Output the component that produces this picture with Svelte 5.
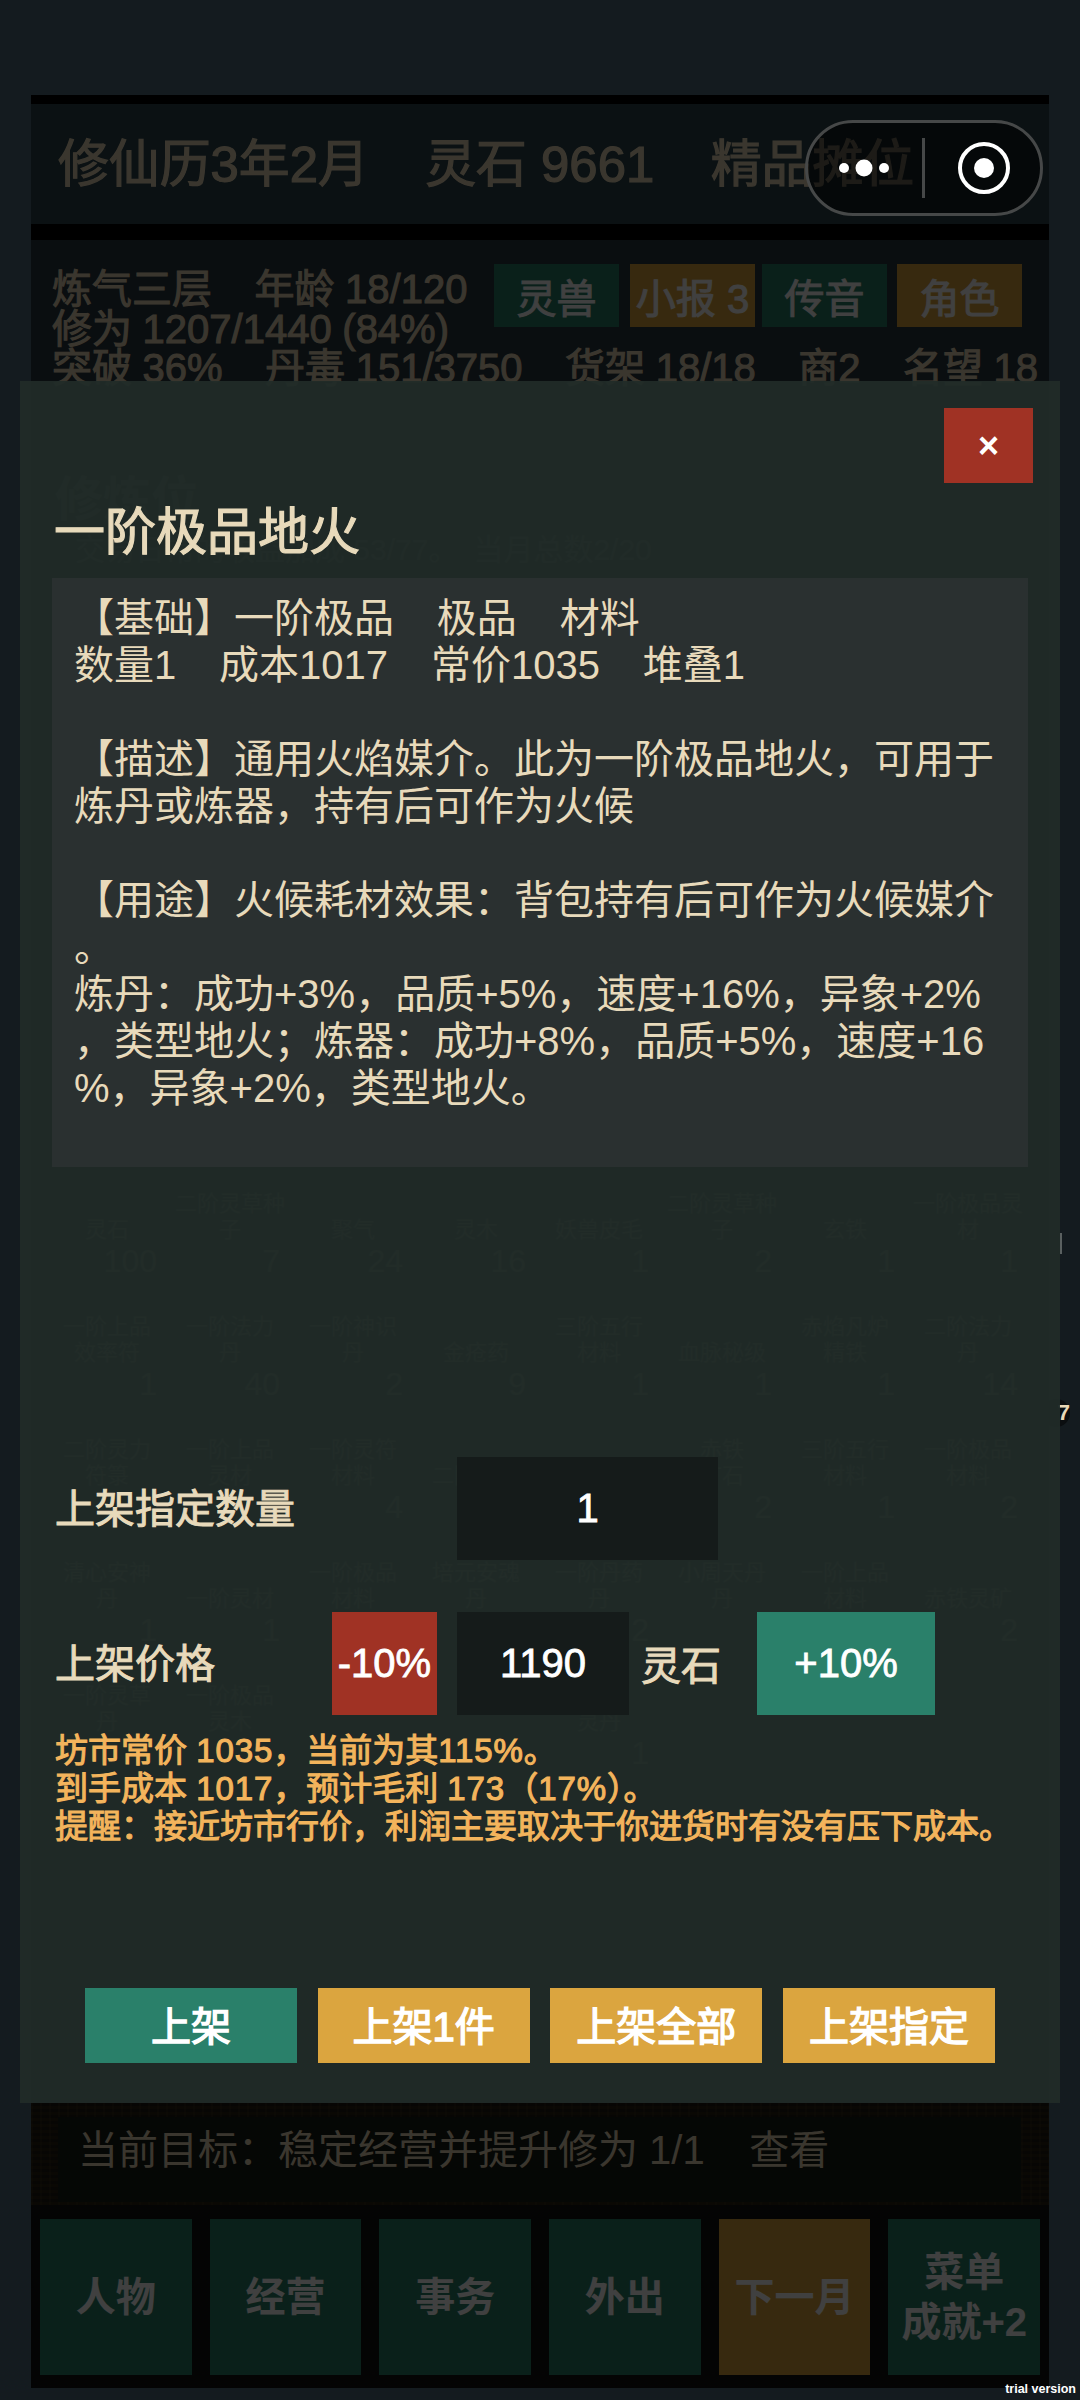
<script>
  const tags = [
    { text: '灵兽', kind: 'green' },
    { text: '小报 3', kind: 'amber' },
    { text: '传音', kind: 'green' },
    { text: '角色', kind: 'amber' }
  ];

  // shelf behind the dialog, barely visible through it
  const goods = [
    ['灵石', '100'], ['二阶灵草种子', '7'], ['聚气', '24'], ['灵木', '16'], ['妖兽皮毛', '1'], ['二阶灵草种子', '2'], ['玄铁', '1'], ['一阶极品灵材', '1'],
    ['一阶上品\n效率符', '1'], ['一阶法力\n丹', '40'], ['一阶神识\n丹', '2'], ['金疮药', '9'], ['三阶五行\n材料', '1'], ['血脉秘级', '1'], ['赤焰凡炉\n精铁', '1'], ['二阶法力\n丹', '14'],
    ['二阶灵力\n符箓', ''], ['一阶上品\n灵材', ''], ['一阶灵符\n材料', '4'], ['二阶灵草', ''], ['灵药', ''], ['赤铁\n矿石', '2'], ['三阶五行\n材料', '1'], ['一阶极品\n材料', '2'],
    ['清心安神\n丹', '1'], ['一阶灵材', '1'], ['一阶极品\n材料', ''], ['培元安魂\n丹', ''], ['一阶丹药\n丹', '2'], ['小周天丹\n丹', ''], ['一阶上品\n材料', ''], ['赤铁灵矿', '2'],
    ['一阶灵草\n丹', ''], ['一阶极品\n灵木', ''], ['', ''], ['', ''], ['灵丹', '1'], ['', ''], ['', ''], ['', '']
  ];

  const tabs = [
    { text: '人物', kind: 'green' },
    { text: '经营', kind: 'green' },
    { text: '事务', kind: 'green' },
    { text: '外出', kind: 'green' },
    { text: '下一月', kind: 'amber' },
    { text: '菜单\n成就+2', kind: 'green' }
  ];

  const detail = `【基础】一阶极品    极品    材料
数量1    成本1017    常价1035    堆叠1

【描述】通用火焰媒介。此为一阶极品地火，可用于
炼丹或炼器，持有后可作为火候

【用途】火候耗材效果：背包持有后可作为火候媒介
。
炼丹：成功+3%，品质+5%，速度+16%，异象+2%
，类型地火；炼器：成功+8%，品质+5%，速度+16
%，异象+2%，类型地火。`;

  const actions = [
    { text: '上架', kind: 'green' },
    { text: '上架1件', kind: 'amber' },
    { text: '上架全部', kind: 'amber' },
    { text: '上架指定', kind: 'amber' }
  ];
</script>

<div class="page">
  <div class="game">
    <div class="strip top"></div>
    <header class="bar">修仙历3年2月    灵石 9661    精品摊位</header>
    <div class="strip mid"></div>

    <section class="info">
      <div class="tags">
        {#each tags as t}
          <span class="tag {t.kind}">{t.text}</span>
        {/each}
      </div>
      <div class="info-text">{`炼气三层    年龄 18/120
修为 1207/1440 (84%)
突破 36%    丹毒 151/3750    货架 18/18    商2    名望 18`}</div>
    </section>

    <section class="shelf">
      <h3>修炼位</h3>
      <p>交易日常的收益加成 53/77。　当月总数2/20</p>
      <div class="goods">
        {#each goods as g}
          <div class="cell">
            <span class="name">{g[0]}</span>
            <span class="qty">{g[1]}</span>
          </div>
        {/each}
      </div>
    </section>

    <section class="goal">
      <div class="goal-box">当前目标：稳定经营并提升修为 1/1    查看</div>
    </section>

    <nav class="tabs">
      {#each tabs as t}
        <span class="tab {t.kind}">{t.text}</span>
      {/each}
    </nav>

    <div class="mask"></div>
  </div>

  <span class="edge-badge">7</span>
  <span class="edge-mark"></span>

  <div class="capsule">
    <svg class="dots" width="60" height="20" viewBox="0 0 60 20">
      <circle cx="9" cy="10" r="5" fill="#fff" />
      <circle cx="29" cy="10" r="8.5" fill="#fff" />
      <circle cx="49" cy="10" r="5" fill="#fff" />
    </svg>
    <i class="divider"></i>
    <svg class="target" width="56" height="56" viewBox="0 0 56 56">
      <circle cx="28" cy="28" r="24" fill="none" stroke="#fff" stroke-width="4" />
      <circle cx="28" cy="28" r="10" fill="#fff" />
    </svg>
  </div>

  <div class="modal">
    <div class="close-row"><button class="close">×</button></div>
    <h2 class="title">一阶极品地火</h2>
    <div class="detail">{detail}</div>

    <div class="row qty-row">
      <span class="label qty-label">上架指定数量</span>
      <div class="field qty-field">1</div>
    </div>

    <div class="row price-row">
      <span class="label price-label">上架价格</span>
      <button class="step minus">-10%</button>
      <div class="field price-field">1190</div>
      <span class="label unit">灵石</span>
      <button class="step plus">+10%</button>
    </div>

    <div class="notes">
      坊市常价{' '}<span class="num">1035</span>，当前为其<span class="num">115%</span>。<br />
      到手成本{' '}<span class="num">1017</span>，预计毛利{' '}<span class="num">173</span>（<span class="num">17%</span>）。<br />
      提醒：接近坊市行价，利润主要取决于你进货时有没有压下成本。
    </div>

    <div class="actions">
      {#each actions as a}
        <button class="action {a.kind}">{a.text}</button>
      {/each}
    </div>
  </div>

  <span class="trial">trial version</span>
</div>

<style>
  :global(body) {
    margin: 0;
    background: #141b1f;
  }

  .page {
    position: relative;
    width: 1080px;
    height: 2400px;
    overflow: hidden;
    background: #141b1f;
    font-family: "Liberation Sans", "Noto Sans CJK SC", sans-serif;
    font-size: 40px;
  }

  .game {
    position: absolute;
    left: 31px;
    top: 95px;
    width: 1018px;
    height: 2293px;
    display: flex;
    flex-direction: column;
    background: #101414;
    color: #e8d8b8;
    overflow: hidden;
  }

  .mask {
    position: absolute;
    inset: 0;
    background: rgba(0, 0, 0, 0.75);
  }

  .strip.top { height: 9px; background: #000; }
  .strip.mid { height: 16px; background: #000; }

  .bar {
    height: 120px;
    box-sizing: border-box;
    display: flex;
    align-items: center;
    padding: 0 0 8px 27px;
    background: #2c444c;
    font-size: 50.85px;
    -webkit-text-stroke: 1.2px currentColor;
    white-space: pre;
  }

  .info {
    height: 170px;
    padding: 24px 20px 0 21px;
    background: #283840;
    overflow: hidden;
    box-sizing: border-box;
    position: relative;
  }

  .info-text {
    font-size: 40px;
    word-spacing: -0.5px;
    line-height: 39.6px;
    padding-top: 6px;
    -webkit-text-stroke: 1px currentColor;
    white-space: pre;
  }

  .tags {
    position: absolute;
    top: 24px;
    left: 463px;
    display: flex;
    gap: 11px;
  }

  .tag {
    width: 125px;
    height: 63px;
    display: flex;
    align-items: center;
    justify-content: center;
    color: #fff;
    -webkit-text-stroke: 1px currentColor;
    white-space: nowrap;
  }

  .tag:nth-child(3) { margin-left: -4px; }
  .tag:nth-child(4) { margin-left: -1px; }

  .green { background: #2a806a; }
  .amber { background: #dba53f; }

  .shelf {
    flex: 1;
    min-height: 0;
    background: #283838;
    padding: 60px 24px 0;
    overflow: hidden;
  }

  .shelf h3 {
    margin: 0;
    font-size: 48px;
    line-height: 60px;
    color: #cbbb98;
  }

  .shelf p {
    margin: 0;
    font-size: 30px;
    line-height: 40px;
    padding-left: 20px;
    color: #cbbb98;
  }

  .goods {
    margin: 596px 0 0 -3px;
    display: grid;
    grid-template-columns: repeat(8, 110px);
    grid-auto-rows: 113px;
    gap: 10px 13px;
  }

  .cell {
    display: flex;
    flex-direction: column;
    justify-content: flex-end;
    background: #2c3e40;
    color: #e8d8b8;
    text-align: center;
  }

  .name {
    font-size: 22px;
    line-height: 26px;
    white-space: pre-line;
  }

  .qty {
    font-size: 32px;
    line-height: 36px;
    height: 36px;
    text-align: right;
    padding-right: 5px;
  }

  .goal {
    height: 102px;
    padding: 14px 28px 3px 27px;
    box-sizing: border-box;
    flex: none;
    background:
      repeating-linear-gradient(90deg, rgba(70, 56, 32, 0.3) 0 2px, transparent 2px 9px),
      repeating-linear-gradient(0deg, #2a2212 0 3px, #1e1a10 3px 6px);
  }

  .goal-box {
    height: 100%;
    background: #141c14;
    padding-left: 20px;
    padding-top: 5px;
    line-height: 56px;
    box-sizing: border-box;
    white-space: pre;
  }

  .tabs {
    flex: none;
    height: 183px;
    padding: 14px 9px 13px;
    box-sizing: border-box;
    display: flex;
    gap: 18px;
    background: #101010;
  }

  .tab {
    flex: 1;
    display: flex;
    align-items: center;
    justify-content: center;
    text-align: center;
    color: #fff;
    font-weight: 700;
    line-height: 50px;
    white-space: pre-line;
  }

  .edge-badge {
    position: absolute;
    left: 1042px;
    top: 1399px;
    width: 28px;
    height: 28px;
    border-radius: 50%;
    background: #0b0e10;
    color: #e8d8b8;
    font-size: 22px;
    font-weight: 700;
    line-height: 28px;
    text-align: right;
  }

  .edge-mark {
    position: absolute;
    left: 1060px;
    top: 1233px;
    width: 2px;
    height: 21px;
    background: #5a6060;
  }

  .capsule {
    position: absolute;
    left: 805px;
    top: 120px;
    width: 238px;
    height: 96px;
    box-sizing: border-box;
    border: 3px solid #464848;
    border-radius: 48px;
    background: rgba(0, 0, 0, 0.5);
    z-index: 4;
  }

  .dots { position: absolute; left: 27px; top: 35px; }
  .target { position: absolute; left: 148px; top: 17px; }

  .divider {
    position: absolute;
    left: 114px;
    top: 15px;
    width: 3px;
    height: 60px;
    background: #464848;
  }

  .modal {
    position: absolute;
    left: 20px;
    top: 381px;
    width: 1040px;
    height: 1722px;
    box-sizing: border-box;
    background: rgba(33, 43, 40, 0.945);
    color: #e8dabb;
    z-index: 3;
  }

  button {
    border: 0;
    padding: 0;
    margin: 0;
    font: inherit;
    color: #fff;
  }

  .close-row {
    display: flex;
    justify-content: flex-end;
    padding: 27px 27px 0 0;
  }

  .close {
    width: 89px;
    height: 75px;
    background: #a03224;
    font-size: 36px;
    font-weight: 700;
  }

  .title {
    margin: 15px 0 10px;
    padding-left: 34px;
    font-size: 51px;
    line-height: 70px;
    font-weight: 400;
    -webkit-text-stroke: 1.2px currentColor;
  }

  .detail {
    margin: 0 32px;
    height: 589px;
    box-sizing: border-box;
    padding: 17px 22px 0;
    background: #2a3030;
    font-size: 40px;
    word-spacing: -0.4px;
    line-height: 47px;
    white-space: pre;
  }

  .row {
    display: flex;
    align-items: center;
    padding-left: 35px;
    height: 103px;
  }

  .qty-row { margin-top: 290px; }
  .price-row { margin-top: 52px; }

  .label {
    padding-bottom: 6px;
    -webkit-text-stroke: 1px currentColor;
    white-space: nowrap;
  }

  .qty-label { width: 402px; }
  .price-label { width: 277px; }

  .field {
    height: 100%;
    display: flex;
    align-items: center;
    justify-content: center;
    background: #151b1a;
    color: #fff;
    -webkit-text-stroke: 0.8px currentColor;
  }

  .qty-field { width: 261px; }
  .price-field { width: 172px; margin-left: 20px; }

  .unit {
    margin-left: 12px;
    width: 81px;
    padding-bottom: 2px;
  }

  .step {
    height: 100%;
    -webkit-text-stroke: 0.8px currentColor;
  }
  .minus { width: 105px; background: #a03224; }
  .plus { width: 178px; margin-left: 35px; background: #2a806a; }

  .notes {
    margin-top: 17px;
    padding-left: 35px;
    font-size: 33px;
    line-height: 38px;
    -webkit-text-stroke: 1.1px currentColor;
    color: #f3b45c;
    white-space: nowrap;
  }

  .num { letter-spacing: 0.9px; }

  .actions {
    margin-top: 142px;
    padding-left: 65px;
    display: flex;
    gap: 20.67px;
  }

  .action {
    width: 212px;
    height: 75px;
    padding-bottom: 4px;
    -webkit-text-stroke: 1.4px currentColor;
  }

  .trial {
    position: absolute;
    right: 4px;
    top: 2379px;
    color: #fff;
    font-family: "Liberation Sans", sans-serif;
    font-size: 12.5px;
    font-weight: 700;
    line-height: 20px;
  }
</style>
